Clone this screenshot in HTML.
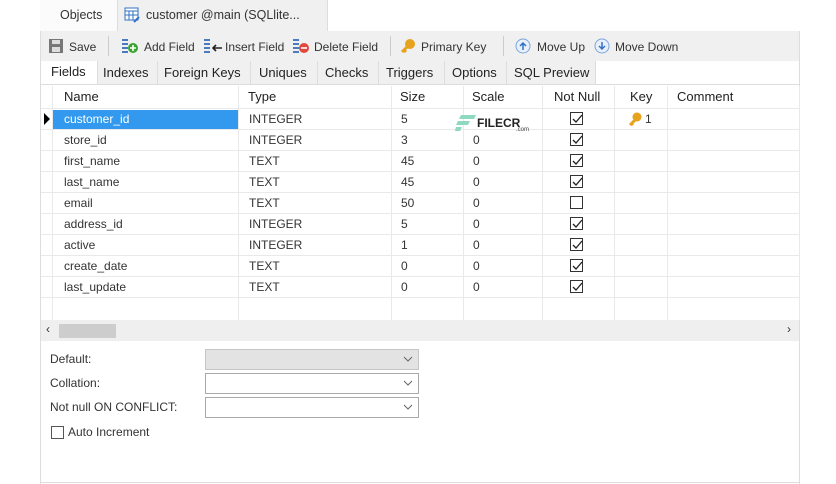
<!DOCTYPE html>
<html><head><style>
*{box-sizing:border-box;margin:0;padding:0}
body{width:836px;height:484px;background:#fff;font-family:"Liberation Sans",sans-serif;font-size:12px;color:#333;position:relative;overflow:hidden}
.a{position:absolute;white-space:nowrap}
.vl{position:absolute;width:1px;background:#e9e9e9}
.hl{position:absolute;height:1px;background:#e9e9e9}
.cb{position:absolute;width:13px;height:13px;border:1px solid #333;background:#fff}
.cb svg{position:absolute;left:0;top:0}
.sel{position:absolute;width:214px;height:21px;border:1px solid #d0d0d0;background:#fff}
.sel svg{position:absolute;right:5px;top:6px}
</style></head><body>
<div class="a" style="left:40px;top:0;width:760px;height:484px;border-left:1px solid #ddd;border-right:1px solid #ddd"></div>
<div class="a" style="left:40px;top:0;width:760px;height:31px;background:#f4f4f4;border-bottom:1px solid #ddd"></div>
<div class="a" style="left:40px;top:0;width:78px;height:31px;background:#fbfbfb;border-right:1px solid #ddd"></div>
<div class="a" style="left:60px;top:8px;font-size:12.5px">Objects</div>
<div class="a" style="left:118px;top:0;width:210px;height:31px;background:#f0f0f0;border-right:1px solid #ddd"></div>
<svg class="a" style="left:124px;top:7px" width="16" height="16"><rect x="1" y="1" width="13" height="12" fill="#fff" stroke="#2f72c4"/><path d="M1 4H14M5 4V13M9 4V13M1 8H14" stroke="#2f72c4"/><path d="M10 15l5-5" stroke="#2f72c4" stroke-width="2"/></svg>
<div class="a" style="left:146px;top:8px;font-size:12.5px">customer @main (SQLlite...</div>
<div class="a" style="left:328px;top:0;width:472px;height:31px;background:#fff"></div>
<div class="a" style="left:41px;top:31px;width:758px;height:30px;background:#f0f0f0"></div>
<svg class="a" style="left:48px;top:38px" width="16" height="16"><rect x="1" y="1" width="14" height="14" fill="#777"/><rect x="4" y="2" width="8" height="4" fill="#ddd"/><rect x="4" y="9" width="8" height="5" fill="#ddd"/></svg>
<div class="a" style="left:69px;top:40px">Save</div>
<div class="vl" style="left:108px;top:36px;height:20px;background:#ccc"></div>
<svg class="a" style="left:121px;top:38px" width="18" height="16"><path d="M1 2h6M1 6h6M1 10h6M1 14h6" stroke="#4a7bbf" stroke-width="2"/><circle cx="12" cy="10" r="5" fill="#3aa335"/><path d="M9 10h6M12 7v6" stroke="#fff" stroke-width="1.6"/></svg>
<div class="a" style="left:144px;top:40px">Add Field</div>
<svg class="a" style="left:203px;top:38px" width="20" height="16"><path d="M1 2h6M1 6h6M1 10h6M1 14h6" stroke="#4a7bbf" stroke-width="2"/><path d="M19 10h-9M13 7l-3 3 3 3" stroke="#222" stroke-width="1.6" fill="none"/></svg>
<div class="a" style="left:225px;top:40px">Insert Field</div>
<svg class="a" style="left:292px;top:38px" width="18" height="16"><path d="M1 2h6M1 6h6M1 10h6M1 14h6" stroke="#4a7bbf" stroke-width="2"/><circle cx="12" cy="10" r="5" fill="#e04a3c"/><path d="M9 10h6" stroke="#fff" stroke-width="1.6"/></svg>
<div class="a" style="left:314px;top:40px">Delete Field</div>
<div class="vl" style="left:390px;top:36px;height:20px;background:#ccc"></div>
<svg class="a" style="left:400px;top:38px" width="16" height="16"><circle cx="10" cy="6" r="5" fill="#e7a21e"/><path d="M7 9l-5 5M4 12l2 2" stroke="#e7a21e" stroke-width="3"/></svg>
<div class="a" style="left:421px;top:40px">Primary Key</div>
<div class="vl" style="left:503px;top:36px;height:20px;background:#ccc"></div>
<svg class="a" style="left:515px;top:38px" width="16" height="16"><circle cx="8" cy="8" r="7" fill="#e8f1fb" stroke="#7aa6d8"/><path d="M8 12V5M5 8l3-3 3 3" stroke="#2f72c4" stroke-width="1.5" fill="none"/></svg>
<div class="a" style="left:537px;top:40px">Move Up</div>
<svg class="a" style="left:594px;top:38px" width="16" height="16"><circle cx="8" cy="8" r="7" fill="#e8f1fb" stroke="#7aa6d8"/><path d="M8 4v7M5 8l3 3 3-3" stroke="#2f72c4" stroke-width="1.5" fill="none"/></svg>
<div class="a" style="left:615px;top:40px">Move Down</div>
<div class="a" style="left:41px;top:61px;width:758px;height:24px;background:#fff;border-bottom:1px solid #ddd"></div>
<div class="a" style="left:97px;top:61px;width:498px;height:23px;background:#f0f0f0"></div>
<div class="vl" style="left:97px;top:61px;height:23px;background:#ddd"></div>
<div class="vl" style="left:157px;top:61px;height:23px;background:#ddd"></div>
<div class="vl" style="left:250px;top:61px;height:23px;background:#ddd"></div>
<div class="vl" style="left:317px;top:61px;height:23px;background:#ddd"></div>
<div class="vl" style="left:378px;top:61px;height:23px;background:#ddd"></div>
<div class="vl" style="left:444px;top:61px;height:23px;background:#ddd"></div>
<div class="vl" style="left:506px;top:61px;height:23px;background:#ddd"></div>
<div class="vl" style="left:595px;top:61px;height:23px;background:#ddd"></div>
<div class="a" style="left:51px;top:64px;font-size:13px;color:#222">Fields</div>
<div class="a" style="left:103px;top:65px;font-size:13px;color:#222">Indexes</div>
<div class="a" style="left:164px;top:65px;font-size:13px;color:#222">Foreign Keys</div>
<div class="a" style="left:259px;top:65px;font-size:13px;color:#222">Uniques</div>
<div class="a" style="left:325px;top:65px;font-size:13px;color:#222">Checks</div>
<div class="a" style="left:386px;top:65px;font-size:13px;color:#222">Triggers</div>
<div class="a" style="left:452px;top:65px;font-size:13px;color:#222">Options</div>
<div class="a" style="left:514px;top:65px;font-size:13px;color:#222">SQL Preview</div>
<div class="hl" style="left:41px;top:108px;width:758px"></div>
<div class="a" style="left:64px;top:89px;font-size:13px;color:#222">Name</div>
<div class="a" style="left:248px;top:89px;font-size:13px;color:#222">Type</div>
<div class="a" style="left:400px;top:89px;font-size:13px;color:#222">Size</div>
<div class="a" style="left:472px;top:89px;font-size:13px;color:#222">Scale</div>
<div class="a" style="left:554px;top:89px;font-size:13px;color:#222">Not Null</div>
<div class="a" style="left:630px;top:89px;font-size:13px;color:#222">Key</div>
<div class="a" style="left:677px;top:89px;font-size:13px;color:#222">Comment</div>
<div class="vl" style="left:52px;top:86px;height:234px"></div>
<div class="vl" style="left:238px;top:86px;height:234px"></div>
<div class="vl" style="left:391px;top:86px;height:234px"></div>
<div class="vl" style="left:463px;top:86px;height:234px"></div>
<div class="vl" style="left:542px;top:86px;height:234px"></div>
<div class="vl" style="left:614px;top:86px;height:234px"></div>
<div class="vl" style="left:667px;top:86px;height:234px"></div>
<div class="vl" style="left:799px;top:86px;height:234px"></div>
<div class="hl" style="left:41px;top:129px;width:758px"></div>
<div class="hl" style="left:41px;top:150px;width:758px"></div>
<div class="hl" style="left:41px;top:171px;width:758px"></div>
<div class="hl" style="left:41px;top:192px;width:758px"></div>
<div class="hl" style="left:41px;top:213px;width:758px"></div>
<div class="hl" style="left:41px;top:234px;width:758px"></div>
<div class="hl" style="left:41px;top:255px;width:758px"></div>
<div class="hl" style="left:41px;top:276px;width:758px"></div>
<div class="hl" style="left:41px;top:297px;width:758px"></div>
<div class="a" style="left:53px;top:110px;width:185px;height:19px;background:#3399ee"></div>
<svg class="a" style="left:43px;top:113px" width="8" height="12"><path d="M1 0L7 6L1 12Z" fill="#000"/></svg>
<div class="a" style="left:64px;top:112px;color:#fff">customer_id</div>
<div class="a" style="left:64px;top:133px">store_id</div>
<div class="a" style="left:64px;top:154px">first_name</div>
<div class="a" style="left:64px;top:175px">last_name</div>
<div class="a" style="left:64px;top:196px">email</div>
<div class="a" style="left:64px;top:217px">address_id</div>
<div class="a" style="left:64px;top:238px">active</div>
<div class="a" style="left:64px;top:259px">create_date</div>
<div class="a" style="left:64px;top:280px">last_update</div>
<div class="a" style="left:249px;top:112px">INTEGER</div>
<div class="a" style="left:249px;top:133px">INTEGER</div>
<div class="a" style="left:249px;top:154px">TEXT</div>
<div class="a" style="left:249px;top:175px">TEXT</div>
<div class="a" style="left:249px;top:196px">TEXT</div>
<div class="a" style="left:249px;top:217px">INTEGER</div>
<div class="a" style="left:249px;top:238px">INTEGER</div>
<div class="a" style="left:249px;top:259px">TEXT</div>
<div class="a" style="left:249px;top:280px">TEXT</div>
<div class="a" style="left:401px;top:112px">5</div>
<div class="a" style="left:401px;top:133px">3</div>
<div class="a" style="left:401px;top:154px">45</div>
<div class="a" style="left:401px;top:175px">45</div>
<div class="a" style="left:401px;top:196px">50</div>
<div class="a" style="left:401px;top:217px">5</div>
<div class="a" style="left:401px;top:238px">1</div>
<div class="a" style="left:401px;top:259px">0</div>
<div class="a" style="left:401px;top:280px">0</div>
<div class="a" style="left:473px;top:133px">0</div>
<div class="a" style="left:473px;top:154px">0</div>
<div class="a" style="left:473px;top:175px">0</div>
<div class="a" style="left:473px;top:196px">0</div>
<div class="a" style="left:473px;top:217px">0</div>
<div class="a" style="left:473px;top:238px">0</div>
<div class="a" style="left:473px;top:259px">0</div>
<div class="a" style="left:473px;top:280px">0</div>
<svg class="a" style="left:455px;top:114px" width="22" height="18"><path d="M6 1h15l-2 4H4zM3 7h12l-2 4H1zM1 13h6l-2 4H0z" fill="#8fd9c0"/></svg>
<div class="a" style="left:477px;top:116px;font-size:12px;font-weight:bold;color:#222">FILECR</div>
<div class="a" style="left:516px;top:127px;font-size:6px;color:#444">.com</div>
<div class="cb" style="left:570px;top:112px"><svg width="12" height="12"><path d="M2 6l3 3 6-7" stroke="#222" stroke-width="1.3" fill="none"/></svg></div>
<div class="cb" style="left:570px;top:133px"><svg width="12" height="12"><path d="M2 6l3 3 6-7" stroke="#222" stroke-width="1.3" fill="none"/></svg></div>
<div class="cb" style="left:570px;top:154px"><svg width="12" height="12"><path d="M2 6l3 3 6-7" stroke="#222" stroke-width="1.3" fill="none"/></svg></div>
<div class="cb" style="left:570px;top:175px"><svg width="12" height="12"><path d="M2 6l3 3 6-7" stroke="#222" stroke-width="1.3" fill="none"/></svg></div>
<div class="cb" style="left:570px;top:196px"></div>
<div class="cb" style="left:570px;top:217px"><svg width="12" height="12"><path d="M2 6l3 3 6-7" stroke="#222" stroke-width="1.3" fill="none"/></svg></div>
<div class="cb" style="left:570px;top:238px"><svg width="12" height="12"><path d="M2 6l3 3 6-7" stroke="#222" stroke-width="1.3" fill="none"/></svg></div>
<div class="cb" style="left:570px;top:259px"><svg width="12" height="12"><path d="M2 6l3 3 6-7" stroke="#222" stroke-width="1.3" fill="none"/></svg></div>
<div class="cb" style="left:570px;top:280px"><svg width="12" height="12"><path d="M2 6l3 3 6-7" stroke="#222" stroke-width="1.3" fill="none"/></svg></div>
<svg class="a" style="left:627px;top:112px" width="16" height="16"><circle cx="10" cy="5" r="4.5" fill="#e7a21e"/><path d="M8 8l-5 5M4 11l2 2" stroke="#e7a21e" stroke-width="3"/></svg>
<div class="a" style="left:645px;top:112px">1</div>
<div class="a" style="left:41px;top:320px;width:758px;height:21px;background:#efefef"></div>
<div class="a" style="left:59px;top:324px;width:57px;height:14px;background:#cdcdcd"></div>
<div class="a" style="left:46px;top:322px;font-size:12px">‹</div>
<div class="a" style="left:787px;top:322px;font-size:12px">›</div>
<div class="a" style="left:50px;top:352px">Default:</div>
<div class="a" style="left:50px;top:376px">Collation:</div>
<div class="a" style="left:50px;top:400px">Not null ON CONFLICT:</div>
<div class="sel" style="left:205px;top:349px;background:#e3e3e3;border-color:#c6c6c6"><svg width="10" height="6"><path d="M1 1l4 4 4-4" stroke="#666" fill="none"/></svg></div>
<div class="sel" style="left:205px;top:373px;border-color:#aaa"><svg width="10" height="6"><path d="M1 1l4 4 4-4" stroke="#666" fill="none"/></svg></div>
<div class="sel" style="left:205px;top:397px;border-color:#aaa"><svg width="10" height="6"><path d="M1 1l4 4 4-4" stroke="#666" fill="none"/></svg></div>
<div class="cb" style="left:51px;top:426px;border-color:#555"></div>
<div class="a" style="left:68px;top:425px">Auto Increment</div>
<div class="hl" style="left:41px;top:482px;width:758px;background:#ddd"></div>
</body></html>
